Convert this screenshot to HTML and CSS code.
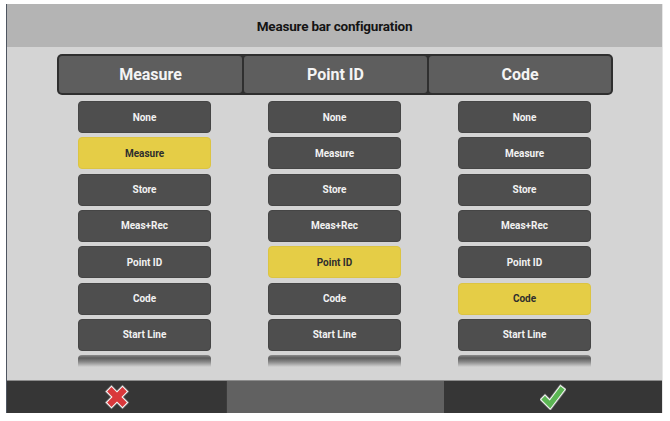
FILE: index.html
```html
<!DOCTYPE html>
<html>
<head>
<meta charset="utf-8">
<link rel="stylesheet" href="styles.css">
</head>
<body>
<div class="app">
  <div class="titlebar">Measure bar configuration</div>
  <div class="content">
    <div class="colheads">
      <div class="colhead">Measure</div>
      <div class="colhead">Point ID</div>
      <div class="colhead">Code</div>
    </div>
    <div class="columns">
      <div class="col">
        <div class="btn">None</div>
        <div class="btn sel">Measure</div>
        <div class="btn">Store</div>
        <div class="btn">Meas+Rec</div>
        <div class="btn">Point ID</div>
        <div class="btn">Code</div>
        <div class="btn">Start Line</div>
        <div class="btn fade"></div>
      </div>
      <div class="col">
        <div class="btn">None</div>
        <div class="btn">Measure</div>
        <div class="btn">Store</div>
        <div class="btn">Meas+Rec</div>
        <div class="btn sel">Point ID</div>
        <div class="btn">Code</div>
        <div class="btn">Start Line</div>
        <div class="btn fade"></div>
      </div>
      <div class="col">
        <div class="btn">None</div>
        <div class="btn">Measure</div>
        <div class="btn">Store</div>
        <div class="btn">Meas+Rec</div>
        <div class="btn">Point ID</div>
        <div class="btn sel">Code</div>
        <div class="btn">Start Line</div>
        <div class="btn fade"></div>
      </div>
    </div>
  </div>
  <div class="footer">
    <div class="fbtn">
      <svg width="26" height="26" viewBox="0 0 26 26">
        <g fill="none" stroke-linecap="square">
          <g stroke="#8a8a8a" stroke-width="9.5"><line x1="7.5" y1="7.5" x2="18.5" y2="18.5"/><line x1="18.5" y1="7.5" x2="7.5" y2="18.5"/></g>
          <g stroke="#ffffff" stroke-width="8"><line x1="7.5" y1="7.5" x2="18.5" y2="18.5"/><line x1="18.5" y1="7.5" x2="7.5" y2="18.5"/></g>
          <g stroke="#d9383c" stroke-width="6.2"><line x1="7.5" y1="7.5" x2="18.5" y2="18.5"/><line x1="18.5" y1="7.5" x2="7.5" y2="18.5"/></g>
        </g>
      </svg>
    </div>
    <div class="fbtn mid"></div>
    <div class="fbtn">
      <svg width="26" height="26" viewBox="0 0 26 26">
        <g fill="none" stroke-linecap="square" stroke-linejoin="miter">
          <polyline points="5,15.5 10,20.5 21,6" stroke="#8a8a8a" stroke-width="8.5"/>
          <polyline points="5,15.5 10,20.5 21,6" stroke="#ffffff" stroke-width="7"/>
          <polyline points="5,15.5 10,20.5 21,6" stroke="#5bb553" stroke-width="5.2"/>
        </g>
      </svg>
    </div>
  </div>
</div>
</body>
</html>
```

FILE: styles.css
```css
* { box-sizing: border-box; }
html, body { margin: 0; padding: 0; background: #ffffff; }
body { font-family: Roboto, "Liberation Sans", sans-serif; }

.app {
  margin: 4px 0 0 6px;
  width: 657px;
  border-left: 1px solid #4e5560;
  border-right: 1px solid #e6e6e6;
  display: flex;
  flex-direction: column;
}

.titlebar {
  height: 43px;
  background: #b4b4b4;
  display: flex;
  align-items: center;
  justify-content: center;
  font-size: 13.5px;
  font-weight: 700;
  color: #141414;
  letter-spacing: -0.2px;
}

.content {
  height: 334px;
  background: #d4d4d4;
  padding-top: 7px;
  border-bottom: 1px solid #8c8c8c;
  overflow: hidden;
}

.colheads {
  margin-left: 50px;
  width: 556px;
  height: 41px;
  background: #2f2f2f;
  border-radius: 5px;
  padding: 2px;
  display: grid;
  grid-template-columns: 183px 183px 182px;
  gap: 2px;
}

.colhead {
  background: #5e5e5e;
  border-radius: 3px;
  color: #f4f4f4;
  font-size: 16px;
  font-weight: 700;
  display: flex;
  align-items: center;
  justify-content: center;
}

.columns {
  margin-top: 6px;
  padding: 0 71px;
  display: flex;
  justify-content: space-between;
}

.col {
  width: 133px;
  display: flex;
  flex-direction: column;
  gap: 4.33px;
}

.btn {
  height: 32px;
  background: #4e4e4e;
  border: 1px solid #454545;
  border-radius: 4px;
  color: #f2f2f2;
  font-size: 10px;
  font-weight: 700;
  display: flex;
  align-items: center;
  justify-content: center;
}

.btn.sel {
  background: #e5cd46;
  border-color: #dcc442;
  color: #2e2e2e;
}

.btn.fade {
  height: 12px;
  border: none;
  border-radius: 4px 4px 0 0;
  background: linear-gradient(#8a8a8a 0px, #5c5c5c 3px, #8a8a8a 7px, #d4d4d4 12px);
}

.footer {
  height: 32px;
  background: #363636;
  display: grid;
  grid-template-columns: 219px 218px 218px;
}

.fbtn {
  display: flex;
  align-items: center;
  justify-content: center;
}

.fbtn.mid {
  background: #616161;
  border-left: 1px solid #3c3c3c;
}
```
